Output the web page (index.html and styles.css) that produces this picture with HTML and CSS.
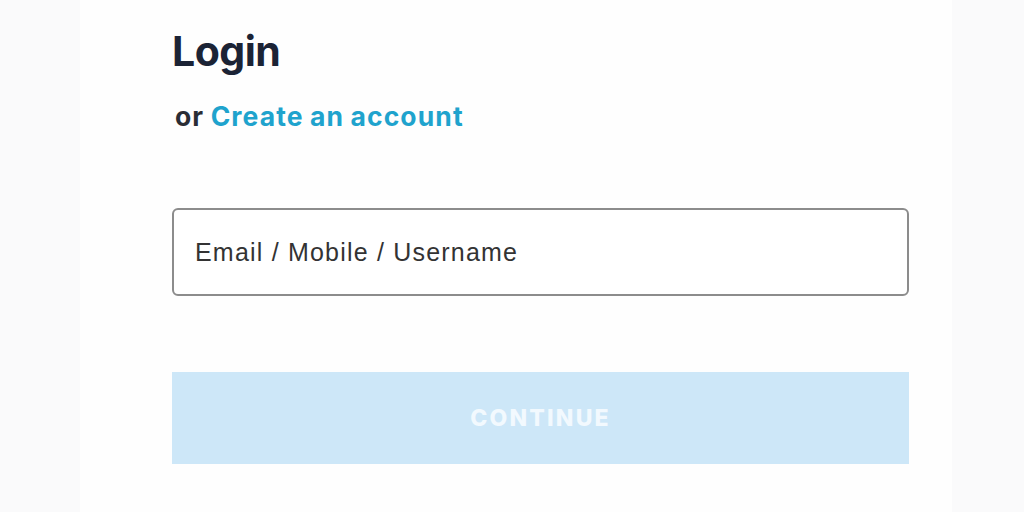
FILE: index.html
```html
<!DOCTYPE html>
<html lang="en">
<head>
    <meta charset="UTF-8">
    <meta name="viewport" content="width=device-width, initial-scale=1.0">
    <title>Login</title>
    <link rel="stylesheet" href="styles.css">
</head>
<body>
    <div class="login-page">
        <div class="login-panel">
            <h1 class="login-title">Login</h1>
            <p class="login-sub">or <a href="#" class="login-link">Create an account</a></p>

            <form class="login-form">
                <input type="text" class="login-input" placeholder="Email / Mobile / Username">
                <button type="button" class="login-btn" disabled>CONTINUE</button>
            </form>
        </div>
    </div>
</body>
</html>
```

FILE: styles.css
```css
* {
    margin: 0;
    padding: 0;
    box-sizing: border-box;
}

:root {
    --text-dark: #1b2335;
    --link: #1fa3cd;
    --border: #8c8c8c;
    --btn-bg: #cde7f8;
}

body {
    font-family: Inter, 'Noto Sans', sans-serif;
    background: #fafafb;
    height: 512px;
    overflow: hidden;
}

.login-page {
    display: flex;
    height: 100%;
    padding-left: 80px;
}

.login-panel {
    width: 872px;
    background: #fefefe;
    padding: 26px 0 0 92px;
}

.login-title {
    font-size: 41px;
    font-weight: 700;
    color: var(--text-dark);
    letter-spacing: -0.5px;
    line-height: 50px;
}

.login-sub {
    margin-top: 25px;
    padding-left: 3px;
    font-size: 26.5px;
    font-weight: 700;
    color: #2a2d35;
    line-height: 30px;
    letter-spacing: 1.1px;
    word-spacing: -1px;
}

.login-link {
    color: var(--link);
    text-decoration: none;
}

.login-form {
    display: flex;
    flex-direction: column;
    gap: 76px;
    margin-top: 77px;
    width: 737px;
}

.login-input {
    height: 88px;
    border: 2px solid var(--border);
    border-radius: 6px;
    padding: 0 21px;
    font-family: 'Liberation Sans', Arial, sans-serif;
    font-size: 25px;
    letter-spacing: 1.2px;
    background: #fff;
    outline: none;
}

.login-input::placeholder {
    color: #333;
}

.login-btn {
    height: 92px;
    border: none;
    background: var(--btn-bg);
    color: #f2f9fe;
    font-family: Inter, sans-serif;
    font-size: 23px;
    font-weight: 800;
    letter-spacing: 2.2px;
}
```
